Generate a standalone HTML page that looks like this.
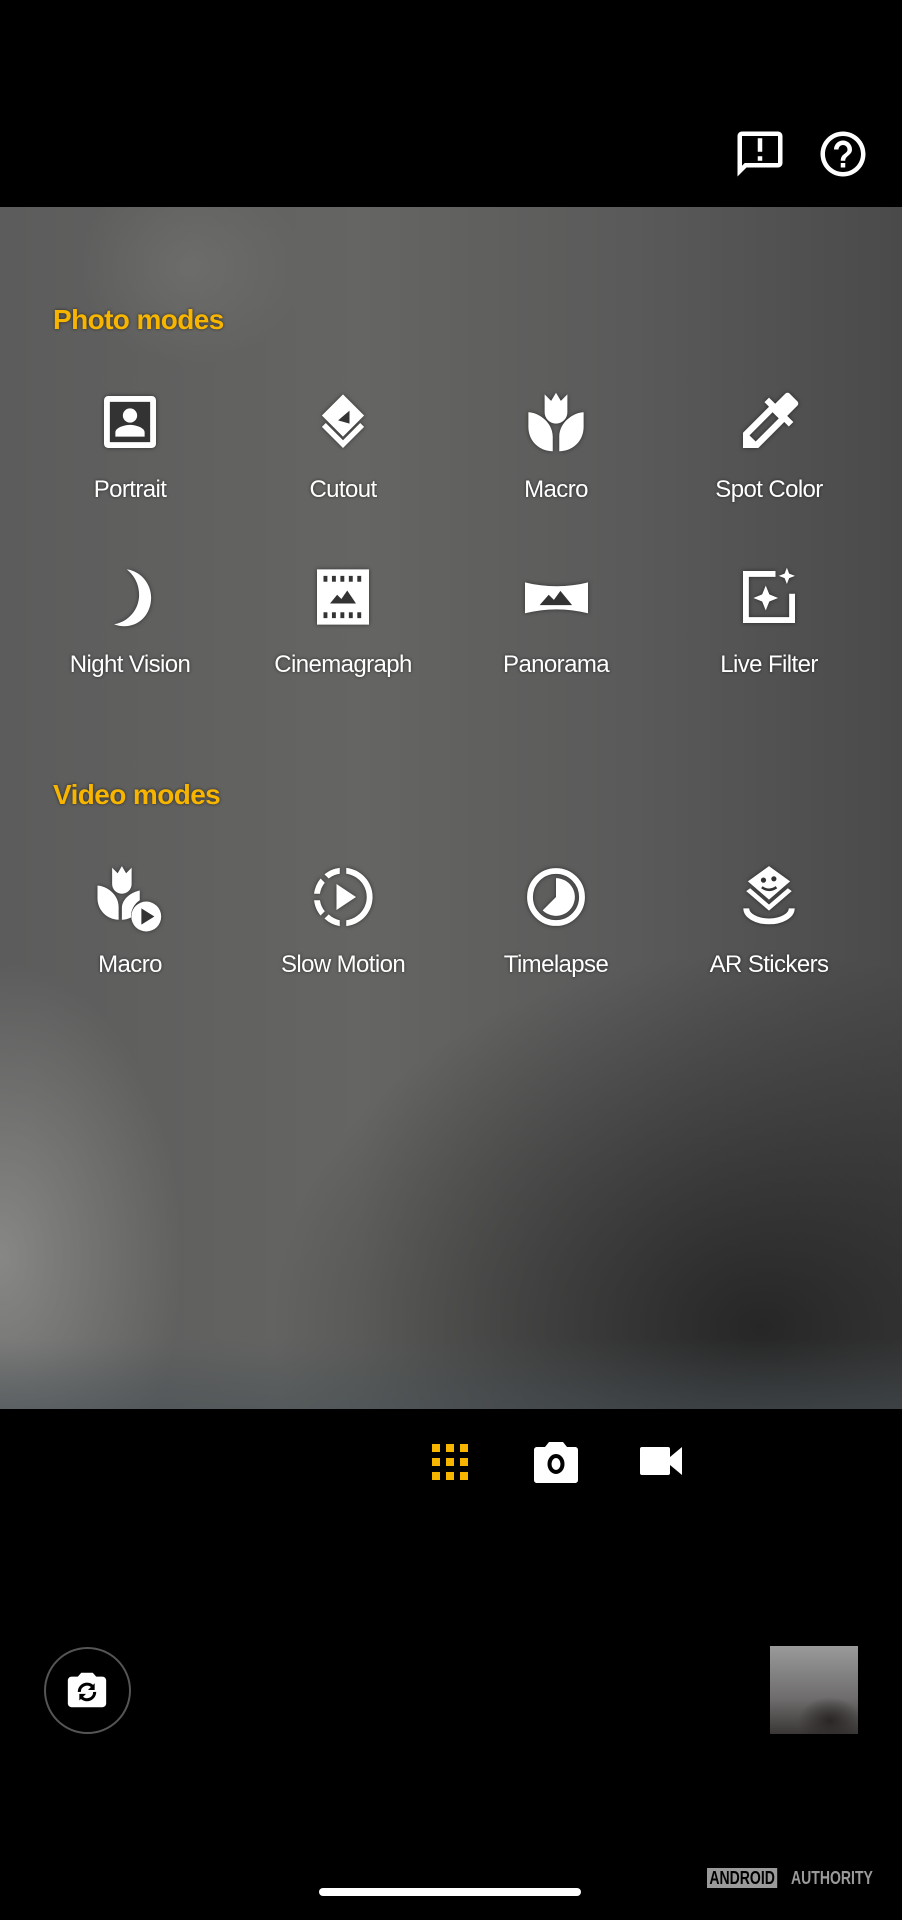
<!DOCTYPE html>
<html><head><meta charset="utf-8"><style>
*{margin:0;padding:0;box-sizing:border-box}
body{width:902px;height:1920px;background:#000;position:relative;overflow:hidden;font-family:"Liberation Sans",sans-serif}
.view{position:absolute;left:0;top:207px;width:902px;height:1202px;
background:
radial-gradient(ellipse 650px 500px at 760px 1120px,rgba(36,36,36,.95),rgba(36,36,36,0) 75%),
radial-gradient(ellipse 260px 420px at 0px 1050px,rgba(140,140,138,.9),rgba(140,140,138,0) 70%),
radial-gradient(ellipse 160px 140px at 190px 60px,rgba(120,120,118,.5),rgba(120,120,118,0) 70%),
linear-gradient(90deg,#5c5c5c 0%,#656563 40%,#5a5a5a 70%,#4a4a4a 100%);}
.view:after{content:"";position:absolute;left:0;right:0;bottom:0;height:70px;background:linear-gradient(180deg,rgba(80,90,95,0),rgba(70,80,85,.5))}
.h{position:absolute;left:53px;color:#f7b500;font-weight:bold;font-size:28px;letter-spacing:-0.6px;text-shadow:0 0 3px rgba(0,0,0,.6)}
.it{position:absolute;width:220px;margin-left:-110px;text-align:center;color:#fff}
.it svg{display:block;margin:0 auto;filter:drop-shadow(0 0 2px rgba(0,0,0,.5))}
.it span{display:block;font-size:24px;line-height:28px;letter-spacing:-0.6px;margin-top:15px;text-shadow:0 0 3px rgba(0,0,0,.6)}
</style></head><body>
<svg style="position:absolute;left:733px;top:127px" width="54" height="54" viewBox="0 0 24 24"><path fill="#fff" d="M20 2H4c-1.1 0-2 .9-2 2v18l4-4h14c1.1 0 2-.9 2-2V4c0-1.1-.9-2-2-2zm0 14H5.2L4 17.2V4h16v12zM11 5h2v6h-2zm0 8h2v2h-2z"/></svg>
<svg style="position:absolute;left:816px;top:127px" width="54" height="54" viewBox="0 0 24 24"><path fill="#fff" d="M11 18h2v-2h-2v2zm1-16C6.48 2 2 6.48 2 12s4.48 10 10 10 10-4.48 10-10S17.52 2 12 2zm0 18c-4.41 0-8-3.59-8-8s3.59-8 8-8 8 3.59 8 8-3.59 8-8 8zm0-14c-2.21 0-4 1.790-4 4h2c0-1.1.9-2 2-2s2 .9 2 2c0 2-3 1.75-3 5h2c0-2.25 3-2.5 3-5 0-2.21-1.79-4-4-4z"/></svg>
<div class="view"></div>
<div class="h" style="top:304px">Photo modes</div>
<div class="h" style="top:779px">Video modes</div>

<div class="it" style="left:130px;top:383px"><svg width="78" height="78" viewBox="0 0 24 24"><rect x="4" y="4" width="16" height="16" rx="1.3" fill="#fff"/><rect x="5.8" y="5.8" width="12.4" height="12.4" fill="#333"/><circle cx="12" cy="10" r="2.2" fill="#fff"/><path d="M7.5 16.5v-1.3c0-1.5 2.9-2.3 4.5-2.3s4.5.8 4.5 2.3v1.3z" fill="#fff"/></svg><span>Portrait</span></div>
<div class="it" style="left:343px;top:383px"><svg width="78" height="78" viewBox="0 0 24 24"><path fill="#fff" d="M12 3.5l6.5 6.5-6.5 6.5-6.5-6.5z"/><path fill="#fff" d="M5.5 13.5l1.2-1.2 5.3 5.3 5.3-5.3 1.2 1.2-6.5 6.5z"/><path fill="#333" d="M10.5 11.5l3.5-3v4z"/></svg><span>Cutout</span></div>
<div class="it" style="left:556px;top:383px"><svg width="78" height="78" viewBox="0 0 24 24"><path fill="#fff" d="M8.5 3.5l2 2 1.5-2.5 1.5 2.5 2-2v5.5a3.5 3.5 0 0 1-7 0z"/><path fill="#fff" d="M3.5 9c3 0 7.5 3 7.5 7.5V21c-4 0-7.5-3-7.5-7.5zM20.5 9c-3 0-7.5 3-7.5 7.5V21c4 0 7.5-3 7.5-7.5z"/></svg><span>Macro</span></div>
<div class="it" style="left:769px;top:383px"><svg width="78" height="78" viewBox="0 0 24 24"><path fill="#fff" d="M20.7 5.6l-2.3-2.3c-.4-.4-1-.4-1.4 0l-3.1 3.1-1.9-1.9-1.4 1.4 1.4 1.4L4 15.3V20h4.7l8-8 1.4 1.4 1.4-1.4-1.9-1.9 3.1-3.1c.4-.4.4-1 0-1.4zM7.9 18L6 16.1l7.1-7.1 1.9 1.9z"/></svg><span>Spot Color</span></div>

<div class="it" style="left:130px;top:558px"><svg width="78" height="78" viewBox="0 0 24 24"><path fill="#fff" d="M11 3.5c2.3 1.8 3.8 4.6 3.8 7.8 0 4.6-3.3 8.3-7.7 9.1 1 .4 2 .6 3.1.6 5 0 8.3-4 8.3-8.8 0-4.4-3.3-8.2-7.5-8.7z"/></svg><span>Night Vision</span></div>
<div class="it" style="left:343px;top:558px"><svg width="78" height="78" viewBox="0 0 24 24"><rect x="4" y="3.5" width="16" height="17" fill="#fff"/><g fill="#333"><rect x="6" y="5.5" width="1.2" height="1.8"/><rect x="8.6" y="5.5" width="1.2" height="1.8"/><rect x="11.2" y="5.5" width="1.2" height="1.8"/><rect x="13.8" y="5.5" width="1.2" height="1.8"/><rect x="16.4" y="5.5" width="1.2" height="1.8"/><rect x="6" y="16.7" width="1.2" height="1.8"/><rect x="8.6" y="16.7" width="1.2" height="1.8"/><rect x="11.2" y="16.7" width="1.2" height="1.8"/><rect x="13.8" y="16.7" width="1.2" height="1.8"/><rect x="16.4" y="16.7" width="1.2" height="1.8"/><path d="M8 14l2.2-2.7 1.3 1.3 1.8-2.6 2.7 4z"/></g></svg><span>Cinemagraph</span></div>
<div class="it" style="left:556px;top:558px"><svg width="89" height="78" viewBox="0 0 27.4 24"><path fill="#fff" d="M4 7.5c6.5 1.6 13 1.6 19.4 0v9.5c-6.4-1.6-12.9-1.6-19.4 0z"/><path fill="#333" d="M8.5 14.5l2.8-3.2 1.6 1.6 2-2.8 3.6 4.4z"/></svg><span>Panorama</span></div>
<div class="it" style="left:769px;top:558px"><svg width="78" height="78" viewBox="0 0 24 24"><path fill="#fff" d="M4 4h10v1.8H5.8v12.4h12.4v-7.2H20V20H4z"/><path fill="#fff" d="M11 8.5l1.1 2.7 2.7 1.1-2.7 1.1L11 16.1l-1.1-2.7-2.7-1.1 2.7-1.1zM17.5 3l.7 1.8 1.8.7-1.8.7-.7 1.8-.7-1.8-1.8-.7 1.8-.7z"/></svg><span>Live Filter</span></div>

<div class="it" style="left:130px;top:858px"><svg width="78" height="78" viewBox="0 0 24 24"><path fill="#fff" d="M6.5 3l1.7 1.7L9.5 2.5l1.3 2.2L12.5 3v5a3 3 0 0 1-6 0z"/><path fill="#fff" d="M2 8.5c2.5 0 6.5 2.5 6.5 6.5V19C5 19 2 16 2 12.5zM15 10c-2.5.5-5.5 2.5-5.5 5.5V19c1 0 2-.3 2.8-.7A6 6 0 0 1 15 13z"/><circle cx="17" cy="18" r="4.6" fill="#fff"/><path fill="#333" d="M15.5 15.5v5l4-2.5z"/></svg><span>Macro</span></div>
<div class="it" style="left:343px;top:858px"><svg width="78" height="78" viewBox="0 0 24 24"><path fill="#fff" d="M13 3.05v1.8c3.6.5 6.3 3.5 6.3 7.150s-2.7 6.65-6.3 7.15v1.8c4.6-.5 8.1-4.3 8.1-8.95S17.6 3.55 13 3.05zM6.3 18.6A8.9 8.9 0 0 0 11 20.95v-1.8a7.1 7.1 0 0 1-3.4-1.8zM4.9 13H3.1c.2 1.8.9 3.4 2 4.7l1.3-1.3A7.1 7.1 0 0 1 4.9 13zM6.4 7.6L5.1 6.3A8.9 8.9 0 0 0 3.1 11h1.8c.2-1.3.7-2.4 1.5-3.4zM11 4.85v-1.8c-1.8.2-3.4.9-4.7 2L7.6 6.3A7.1 7.1 0 0 1 11 4.85zM10 16l6-4-6-4z"/></svg><span>Slow Motion</span></div>
<div class="it" style="left:556px;top:858px"><svg width="78" height="78" viewBox="0 0 24 24"><circle cx="12" cy="12" r="8" fill="none" stroke="#fff" stroke-width="1.8"/><path fill="#fff" d="M12 6.2a5.8 5.8 0 1 1-4.1 9.9L12 12z"/></svg><span>Timelapse</span></div>
<div class="it" style="left:769px;top:858px"><svg width="78" height="78" viewBox="0 0 24 24"><path fill="#fff" d="M12 2.5l6.5 4.7-6.5 5.6-6.5-5.6z"/><circle cx="10.3" cy="6.8" r=".8" fill="#333"/><circle cx="13.5" cy="6.4" r=".8" fill="#333"/><path d="M9.8 9c1.4 1 3 1 4.5 0" stroke="#333" stroke-width=".8" fill="none"/><path fill="#fff" d="M5 10.2l1.2-.9 5.8 5 5.8-5 1.2.9-7 6z"/><path d="M5 15.5c0 2.2 3.1 4 7 4s7-1.8 7-4" stroke="#fff" stroke-width="1.8" fill="none"/></svg><span>AR Stickers</span></div>

<svg style="position:absolute;left:432px;top:1444px" width="37" height="36" viewBox="0 0 37 36"><g fill="#f7b500"><rect x="0" y="0" width="8" height="8"/><rect x="14" y="0" width="8" height="8"/><rect x="28" y="0" width="8" height="8"/><rect x="0" y="14" width="8" height="8"/><rect x="14" y="14" width="8" height="8"/><rect x="28" y="14" width="8" height="8"/><rect x="0" y="28" width="8" height="8"/><rect x="14" y="28" width="8" height="8"/><rect x="28" y="28" width="8" height="8"/></g></svg>
<svg style="position:absolute;left:532px;top:1438px" width="48" height="46" viewBox="0 0 48 46"><path fill="#fff" d="M2 12c0-2 1.5-3 3-3h8l4-5h14l4 5h8c1.5 0 3 1 3 3v30c0 2-1.5 3-3 3H5c-1.5 0-3-1-3-3z"/><ellipse cx="24" cy="26" rx="6.5" ry="8" fill="none" stroke="#000" stroke-width="4"/></svg>
<svg style="position:absolute;left:640px;top:1447px" width="42" height="28" viewBox="0 0 42 28"><rect x="0" y="0" width="30" height="28" rx="2" fill="#fff"/><path fill="#fff" d="M30 10l12-10v28L30 18z"/></svg>

<div style="position:absolute;left:44px;top:1647px;width:87px;height:87px;border-radius:50%;border:2px solid #555"></div>
<svg style="position:absolute;left:64px;top:1667px" width="46" height="46" viewBox="0 0 24 24"><path fill="#fff" d="M20 5h-3.2L15 3H9L7.2 5H4c-1.1 0-2 .9-2 2v12c0 1.1.9 2 2 2h16c1.1 0 2-.9 2-2V7c0-1.1-.9-2-2-2z"/><path fill="none" stroke="#000" stroke-width="1.6" d="M8 13a4 4 0 0 1 7-2.7M16 13a4 4 0 0 1-7 2.7"/><path fill="#000" d="M16 8.5v3.5h-3.5zM8 17.5V14h3.5z"/></svg>
<div style="position:absolute;left:770px;top:1646px;width:88px;height:88px;background:radial-gradient(ellipse 40px 30px at 60px 75px,#2a2626,rgba(40,40,40,0) 80%),linear-gradient(180deg,#9a9a9a,#6e6c6c 60%,#3a3636)"></div>
<div style="position:absolute;left:707px;top:1868px;font-size:18px;font-weight:bold;color:#000;background:#9a9a9a;padding:0 3px;line-height:20px;transform:scaleX(.78);transform-origin:left">ANDROID</div>
<div style="position:absolute;left:791px;top:1868px;font-size:18px;font-weight:bold;color:#9a9a9a;line-height:20px;transform:scaleX(.78);transform-origin:left">AUTHORITY</div>
<div style="position:absolute;left:319px;top:1888px;width:262px;height:8px;border-radius:4px;background:#fff"></div>
</body></html>
